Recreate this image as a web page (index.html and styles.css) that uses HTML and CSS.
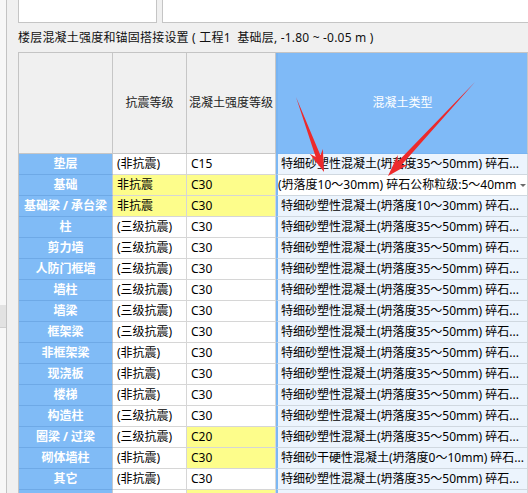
FILE: index.html
```html
<!DOCTYPE html>
<html lang="zh">
<head>
<meta charset="utf-8">
<title>楼层混凝土强度和锚固搭接设置</title>
<link rel="stylesheet" href="styles.css">
</head>
<body>
<div class="page">
  <div class="strip">
    <div class="strip-top"></div>
    <div class="strip-patch"></div>
    <div class="strip-bottom"></div>
  </div>
  <div class="main">
    <div class="topboxes">
      <div class="box box-left"></div>
      <div class="box box-right"></div>
    </div>
    <div class="title">楼层混凝土强度和锚固搭接设置 ( 工程1&nbsp; 基础层, -1.80 ~ -0.05 m )</div>
    <div class="grid">
      <div class="c h"></div>
      <div class="c h">抗震等级</div>
      <div class="c h">混凝土强度等级</div>
      <div class="c h htype">混凝土类型</div>

      <div class="c name">垫层</div><div class="c">(非抗震)</div><div class="c">C15</div><div class="c type">特细砂塑性混凝土(坍落度35～50mm) 碎石...</div>
      <div class="c name">基础</div><div class="c y">非抗震</div><div class="c y">C30</div><div class="c type edit"><span class="edit-text">(坍落度10～30mm) 碎石公称粒级:5～40mm</span><span class="drop"></span></div>
      <div class="c name">基础梁 / 承台梁</div><div class="c y">非抗震</div><div class="c y">C30</div><div class="c type">特细砂塑性混凝土(坍落度10～30mm) 碎石...</div>
      <div class="c name">柱</div><div class="c">(三级抗震)</div><div class="c">C30</div><div class="c type">特细砂塑性混凝土(坍落度35～50mm) 碎石...</div>
      <div class="c name">剪力墙</div><div class="c">(三级抗震)</div><div class="c">C30</div><div class="c type">特细砂塑性混凝土(坍落度35～50mm) 碎石...</div>
      <div class="c name">人防门框墙</div><div class="c">(三级抗震)</div><div class="c">C30</div><div class="c type">特细砂塑性混凝土(坍落度35～50mm) 碎石...</div>
      <div class="c name">墙柱</div><div class="c">(三级抗震)</div><div class="c">C30</div><div class="c type">特细砂塑性混凝土(坍落度35～50mm) 碎石...</div>
      <div class="c name">墙梁</div><div class="c">(三级抗震)</div><div class="c">C30</div><div class="c type">特细砂塑性混凝土(坍落度35～50mm) 碎石...</div>
      <div class="c name">框架梁</div><div class="c">(三级抗震)</div><div class="c">C30</div><div class="c type">特细砂塑性混凝土(坍落度35～50mm) 碎石...</div>
      <div class="c name">非框架梁</div><div class="c">(非抗震)</div><div class="c">C30</div><div class="c type">特细砂塑性混凝土(坍落度35～50mm) 碎石...</div>
      <div class="c name">现浇板</div><div class="c">(非抗震)</div><div class="c">C30</div><div class="c type">特细砂塑性混凝土(坍落度35～50mm) 碎石...</div>
      <div class="c name">楼梯</div><div class="c">(非抗震)</div><div class="c">C30</div><div class="c type">特细砂塑性混凝土(坍落度35～50mm) 碎石...</div>
      <div class="c name">构造柱</div><div class="c">(三级抗震)</div><div class="c">C30</div><div class="c type">特细砂塑性混凝土(坍落度35～50mm) 碎石...</div>
      <div class="c name">圈梁 / 过梁</div><div class="c">(三级抗震)</div><div class="c y">C20</div><div class="c type">特细砂塑性混凝土(坍落度35～50mm) 碎石...</div>
      <div class="c name">砌体墙柱</div><div class="c">(非抗震)</div><div class="c y">C30</div><div class="c type">特细砂干硬性混凝土(坍落度0～10mm) 碎石...</div>
      <div class="c name">其它</div><div class="c">(非抗震)</div><div class="c">C30</div><div class="c type">特细砂塑性混凝土(坍落度35～50mm) 碎石...</div>
      <div class="c name"></div><div class="c"></div><div class="c y"></div><div class="c type"></div>
    </div>
  </div>
</div>
<svg class="arrows" width="528" height="493" viewBox="0 0 528 493" xmlns="http://www.w3.org/2000/svg">
  <polygon fill="#ec2a2c" points="296,97 315.7,157 309.7,153.8 324,172 322.9,149 320.4,155.2"/>
  <polygon fill="#ec2a2c" points="475,82 397.7,161.8 397.8,155.1 388,176 408,164.7 401.3,165.2"/>
</svg>
</body>
</html>
```

FILE: styles.css
```css
html, body {
  margin: 0;
  padding: 0;
}
body {
  width: 528px;
  height: 493px;
  overflow: hidden;
  background: #f0f0f0;
  font-family: "Noto Sans", "Noto Sans CJK SC", sans-serif;
  font-size: 12px;
  color: #000;
  position: relative;
}
.page {
  display: flex;
  height: 493px;
}
.strip {
  width: 6px;
  border-right: 1px solid #c3c3c3;
  display: flex;
  flex-direction: column;
}
.strip-top {
  height: 305px;
  background: #f7f7f7;
}
.strip-patch {
  height: 22px;
  background: #e2e2e2;
  border-bottom: 1px solid #cfcfcf;
}
.strip-bottom {
  flex: 1;
  background: #f7f7f7;
}
.main {
  flex: 1;
  min-width: 0;
  padding-left: 11px;
  overflow: hidden;
}
.topboxes {
  display: flex;
  gap: 5px;
  height: 23px;
}
.box {
  box-sizing: border-box;
  background: #fff;
  border: 1px solid #c5c5c5;
  border-top: none;
  height: 23px;
}
.box-left {
  width: 139px;
}
.box-right {
  flex: 1;
  border-right: none;
}
.title {
  height: 29px;
  line-height: 29px;
  white-space: nowrap;
  color: #111;
  letter-spacing: 0.2px;
}
.grid {
  display: grid;
  grid-template-columns: 94px 74px 89px 252px;
  grid-template-rows: 101px repeat(17, 21px);
  border-top: 1px solid #c4c4c4;
  border-left: 1px solid #c4c4c4;
  width: max-content;
}
.c {
  box-sizing: border-box;
  border-right: 1px solid #d6d6d6;
  border-bottom: 1px solid #d6d6d6;
  line-height: 20px;
  white-space: nowrap;
  overflow: hidden;
  padding-left: 4px;
  background: #fff;
}
.h {
  background: #f0f0f0;
  border-color: #c6c6c6;
  display: flex;
  align-items: center;
  justify-content: center;
  padding: 0;
  color: #222;
}
.htype {
  background: #7fbaf7;
  color: #fff;
  border-left: 2px solid #78b4f2;
  border-bottom-color: #78b4f2;
}
.name {
  background: #80bbf6;
  color: #fff;
  font-weight: bold;
  text-align: center;
  padding: 0;
  border-bottom-color: #6ea9e6;
  border-right-color: #c3c9d0;
}
.type {
  background: #ecf4fd;
  border-left: 2px solid #7cb8f4;
  padding-left: 3px;
  border-bottom-color: #d0d8e0;
}
.y {
  background: #fdfd8b;
}
.edit {
  background: #fff;
  padding-left: 0;
  display: flex;
  align-items: center;
}
.edit-text {
  flex: 1;
}
.drop {
  width: 0;
  height: 0;
  border-left: 3px solid transparent;
  border-right: 3px solid transparent;
  border-top: 3px solid #6a6a6a;
  margin-right: 3px;
  margin-left: 4px;
}
.arrows {
  position: absolute;
  left: 0;
  top: 0;
  pointer-events: none;
}
```
